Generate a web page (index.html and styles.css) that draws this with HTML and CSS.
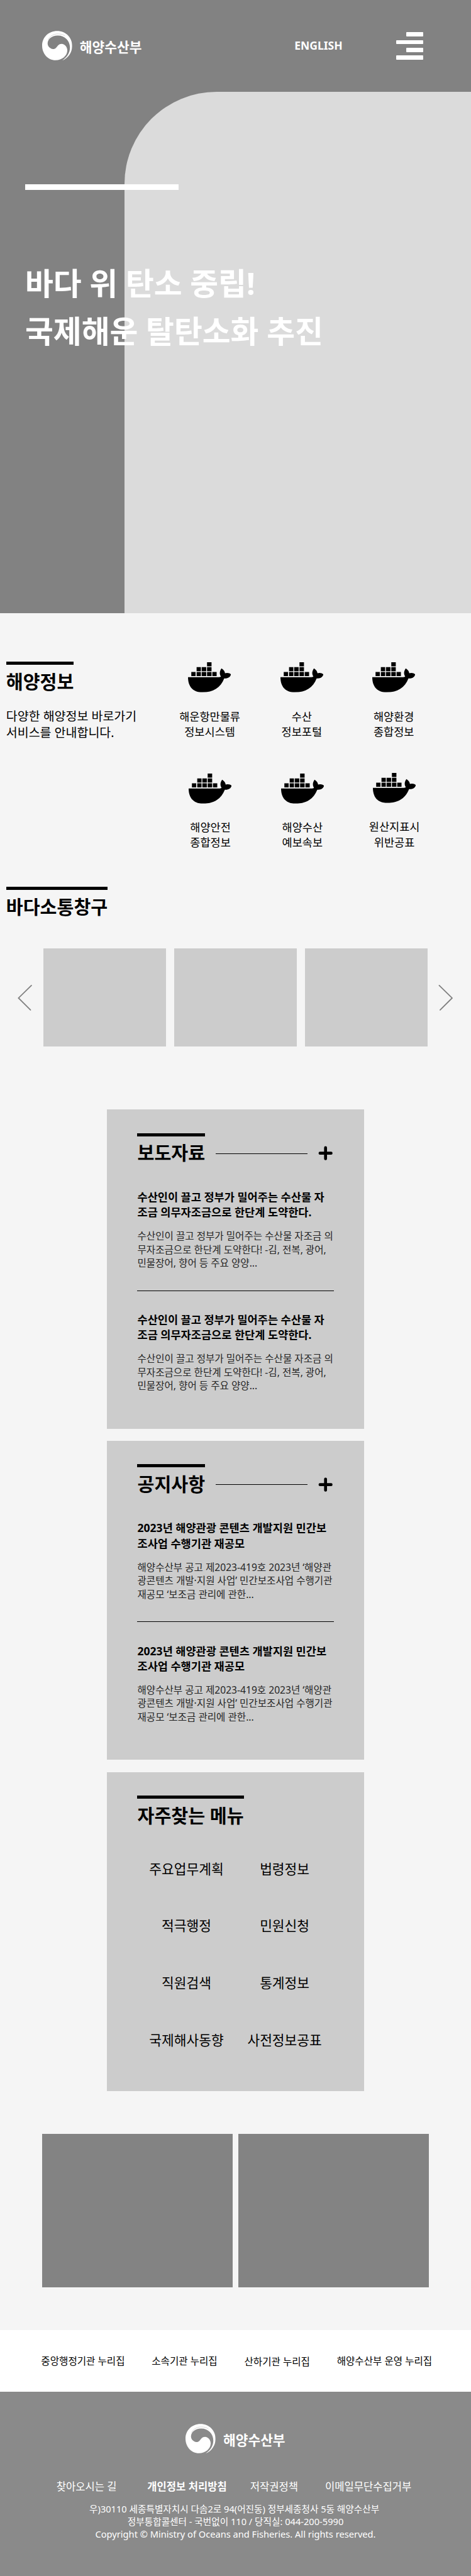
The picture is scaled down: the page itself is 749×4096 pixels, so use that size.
FILE: index.html
```html
<!DOCTYPE html>
<html lang="ko">
<head>
<meta charset="utf-8">
<title>해양수산부</title>
<link rel="stylesheet" href="styles.css">
</head>
<body>
<svg class="defs" width="0" height="0" aria-hidden="true">
  <symbol id="emblem" viewBox="0 0 148 146">
    <path fill="#fff" d="M66 144C28 144 0 112 0 72C0 30 33 0 74 0C116 0 148 32 148 73C148 105 128 134 99 145C122 130 137 108 137 82C137 46 110 21 76 22C48 23 27 38 27 62C27 72 33 81 43 86C50 90 62 91 70 81C76 74 82 63 96 63C112 64 124 78 124 95C124 122 98 144 66 144Z"/>
    <path fill="none" stroke="#b5b5b5" stroke-width="1.6" d="M29 43C40 22 62 11 88 15C99 16 107 20 113 25"/>
  </symbol>
  <symbol id="whale" viewBox="0 0 210 147">
    <path d="M93 0h22v20h-22zM42 24h21v20h-21zM67 24h22v20h-22zM93 24h22v20h-22zM16 48h21v20h-21zM42 48h21v20h-21zM67 48h22v20h-22zM93 48h22v20h-22zM119 48h21v20h-21z"/>
    <path d="M0 73H148C153 73 158 72 161 70C153 58 154 43 164 30C174 36 180 45 181 54C191 50 204 53 210 59C207 73 195 80 177 79C159 124 124 147 70 147C25 147 0 120 0 73Z"/>
  </symbol>
  <symbol id="plus" viewBox="0 0 24 24">
    <path fill="none" stroke="#000" stroke-width="4.8" stroke-linecap="round" d="M3 12H21M12 3V21"/>
  </symbol>
</svg>
<div class="page">
  <section class="hero">
    <header class="header">
      <a class="logo"><svg class="emblem"><use href="#emblem"/></svg><span>해양수산부</span></a>
      <a class="lang">ENGLISH</a>
      <div class="menu"><i class="short"></i><i></i><i class="short"></i><i></i></div>
    </header>
    <div class="hero-panel"></div>
    <div class="hero-copy">
      <div class="hero-bar"></div>
      <h1>바다 위 탄소 중립!<br>국제해운 탈탄소화 추진</h1>
    </div>
  </section>

  <section class="info">
    <div class="intro">
      <h2 class="heading">해양정보</h2>
      <p>다양한 해양정보 바로가기<br>서비스를 안내합니다.</p>
    </div>
    <div class="services">
      <a class="service"><svg class="whale"><use href="#whale"/></svg><span>해운항만물류<br>정보시스템</span></a>
      <a class="service"><svg class="whale"><use href="#whale"/></svg><span>수산<br>정보포털</span></a>
      <a class="service"><svg class="whale"><use href="#whale"/></svg><span>해양환경<br>종합정보</span></a>
      <a class="service low"><svg class="whale"><use href="#whale"/></svg><span>해양안전<br>종합정보</span></a>
      <a class="service low"><svg class="whale"><use href="#whale"/></svg><span>해양수산<br>예보속보</span></a>
      <a class="service low raised"><svg class="whale"><use href="#whale"/></svg><span>원산지표시<br>위반공표</span></a>
    </div>
  </section>

  <section class="talk">
    <h2 class="heading">바다소통창구</h2>
    <div class="carousel">
      <svg class="arrow" viewBox="0 0 24 44"><path d="M22.500 2L1.500 22.500L21 42"/></svg>
      <div class="slides"><div class="slide"></div><div class="slide"></div><div class="slide"></div></div>
      <svg class="arrow" viewBox="0 0 24 44"><path d="M1.500 2L22.500 22.500L3 42"/></svg>
    </div>
  </section>

  <section class="cards">
    <article class="card">
      <div class="card-head"><h2 class="heading">보도자료</h2><span class="rule"></span><svg class="plus"><use href="#plus"/></svg></div>
      <div class="post">
        <h3>수산인이 끌고 정부가 밀어주는 수산물 자<br>조금 의무자조금으로 한단계 도약한다.</h3>
        <p>수산인이 끌고 정부가 밀어주는 수산물 자조금 의<br>무자조금으로 한단계 도약한다! -김, 전복, 광어,<br>민물장어, 향어 등 주요 양양...</p>
      </div>
      <div class="post">
        <h3>수산인이 끌고 정부가 밀어주는 수산물 자<br>조금 의무자조금으로 한단계 도약한다.</h3>
        <p>수산인이 끌고 정부가 밀어주는 수산물 자조금 의<br>무자조금으로 한단계 도약한다! -김, 전복, 광어,<br>민물장어, 향어 등 주요 양양...</p>
      </div>
    </article>
    <article class="card">
      <div class="card-head"><h2 class="heading">공지사항</h2><span class="rule"></span><svg class="plus"><use href="#plus"/></svg></div>
      <div class="post">
        <h3>2023년 해양관광 콘텐츠 개발지원 민간보<br>조사업 수행기관 재공모</h3>
        <p>해양수산부 공고 제2023-419호 2023년 ‘해양관<br>광콘텐츠 개발·지원 사업’ 민간보조사업 수행기관<br>재공모 ‘보조금 관리에 관한...</p>
      </div>
      <div class="post">
        <h3>2023년 해양관광 콘텐츠 개발지원 민간보<br>조사업 수행기관 재공모</h3>
        <p>해양수산부 공고 제2023-419호 2023년 ‘해양관<br>광콘텐츠 개발·지원 사업’ 민간보조사업 수행기관<br>재공모 ‘보조금 관리에 관한...</p>
      </div>
    </article>
    <article class="card">
      <div class="card-head"><h2 class="heading">자주찾는 메뉴</h2></div>
      <div class="quick">
        <a>주요업무계획</a><a>법령정보</a>
        <a>적극행정</a><a>민원신청</a>
        <a>직원검색</a><a>통계정보</a>
        <a>국제해사동향</a><a>사전정보공표</a>
      </div>
    </article>
  </section>

  <section class="banners"><div class="banner"></div><div class="banner"></div></section>

  <nav class="sites">
    <a>중앙행정기관 누리집</a><a>소속기관 누리집</a><a class="lowered">산하기관 누리집</a><a>해양수산부 운영 누리집</a>
  </nav>

  <footer class="footer">
    <a class="logo"><svg class="emblem"><use href="#emblem"/></svg><span>해양수산부</span></a>
    <nav class="policy">
      <a class="visit">찾아오시는 길</a><a class="privacy">개인정보 처리방침</a><a class="copyright">저작권정책</a><a>이메일무단수집거부</a>
    </nav>
    <address>
      <div class="street">우)30110 세종특별자치시 다솜2로 94(어진동) 정부세종청사 5동 해양수산부</div>
      <div>정부통합콜센터 - 국번없이 110 / 당직실: 044-200-5990</div>
      <div>Copyright © Ministry of Oceans and Fisheries. All rights reserved.</div>
    </address>
  </footer>
</div>
</body>
</html>
```
FILE: styles.css
```css
* { box-sizing: border-box; margin: 0; padding: 0; }
html { background: #8a8a8a; }
body {
  font-family: "Noto Sans", "Noto Sans CJK KR", sans-serif;
  color: #000;
  white-space: nowrap;
}
svg { display: block; }
.defs { position: absolute; }
.page { width: 768px; height: 4199.5px; zoom: 0.9754; background: #f5f5f5; overflow: hidden; }

/* hero */
.hero { position: relative; height: 1000px; background: #828282; overflow: hidden; }
.header { display: flex; height: 150px; padding-left: 69px; align-items: center; }
.logo { display: flex; align-items: center; gap: 12px; color: #fff; font-weight: 700; font-size: 22px; line-height: 30px; font-family: "Noto Sans CJK KR", sans-serif; }
.logo span { margin-top: 2px; }
.emblem { width: 49px; height: 49px; }
.header .logo { width: 411px; }
.lang { width: 166px; color: #fff; font-weight: 700; font-size: 18px; line-height: 26px; }
.menu { display: flex; flex-direction: column; align-items: flex-end; gap: 5.5px; width: 44px; }
.menu i { width: 44px; height: 7px; border-radius: 1px; background: #fff; }
.menu .short { width: 28px; }
.hero-panel { height: 850px; margin-left: 203px; background: #dbdbdb; border-top-left-radius: 150px; }
.hero-copy { position: absolute; left: 41px; top: 300px; color: #fff; }
.hero-bar { width: 250px; height: 10px; background: #fff; }
.hero-copy h1 { margin-top: 112px; font-size: 50px; line-height: 78px; }

/* section headings */
.heading { width: max-content; padding-top: 6px; border-top: 5.2px solid #000; font-size: 30px; line-height: 44px; }

/* ocean information */
.info { display: flex; height: 446px; padding: 79px 0 0 10px; }
.intro { width: 257px; }
.intro p { margin-top: 20px; font-size: 20px; line-height: 27px; }
.services { display: grid; grid-template-columns: repeat(3, 150px); grid-template-rows: 182px 126px; margin-top: 1px; }
.service { display: flex; flex-direction: column; align-items: center; gap: 26px; font-size: 18px; line-height: 25px; text-align: center; }
.service.low { padding-left: 2px; margin-top: -1px; }
.service.raised { margin-top: -2px; }
.whale { width: 70px; height: 49px; }

/* carousel */
.talk { height: 363px; padding-left: 10px; }
.carousel { display: flex; align-items: center; padding-left: 19px; margin-top: 45px; height: 160px; }
.arrow { width: 24px; height: 44px; margin-top: 1px; fill: none; stroke: #808080; stroke-width: 1.9; stroke-linecap: round; }
.slides { display: flex; gap: 13px; margin: 0 18px; }
.slide { width: 200px; height: 160px; background: #ccc; }

/* cards */
.cards { display: flex; flex-direction: column; gap: 20px; width: 420px; margin: 0 auto; }
.card { height: 520px; padding: 38px 50px 0; background: #ccc; }
.card-head { display: flex; height: 55px; }
.rule { width: 150px; height: 1.03px; margin: 33px 17px 0; background: #000; }
.plus { width: 24px; height: 24px; margin-top: 21px; }
.post { padding-top: 36.500px; }
.post + .post { margin-top: 33px; padding-top: 34px; border-top: 1.03px solid #000; }
.post h3 { font-size: 18px; line-height: 25px; }
.post p { margin-top: 16px; font-size: 16px; line-height: 22px; color: #262626; }
.quick { display: grid; grid-template-columns: 160px 160px; grid-auto-rows: 93px; margin-top: 18.500px; font-size: 22px; line-height: 93px; text-align: center; }

/* banners and related sites */
.banners { display: flex; gap: 10px; padding: 70px 69px; }
.banner { width: 310px; height: 250px; background: #838383; }
.sites { display: flex; gap: 43.800px; height: 100px; padding-left: 67px; background: #fff; font-size: 16px; line-height: 101px; }
.sites .lowered { margin-top: 1px; height: 99px; }

/* footer */
.footer { display: flex; flex-direction: column; align-items: center; height: 300.5px; padding-top: 52px; background: #8a8a8a; color: #fff; }
.policy { display: flex; width: 100%; margin-top: 40px; padding-left: 92px; font-size: 17px; line-height: 26px; }
.visit { margin-right: 50px; }
.privacy { margin-right: 38px; font-weight: 700; }
.copyright { margin-right: 44px; }
address { margin-top: 14.500px; font-style: normal; font-size: 15px; line-height: 20.300px; text-align: center; }
.street { padding-right: 4px; }
```
